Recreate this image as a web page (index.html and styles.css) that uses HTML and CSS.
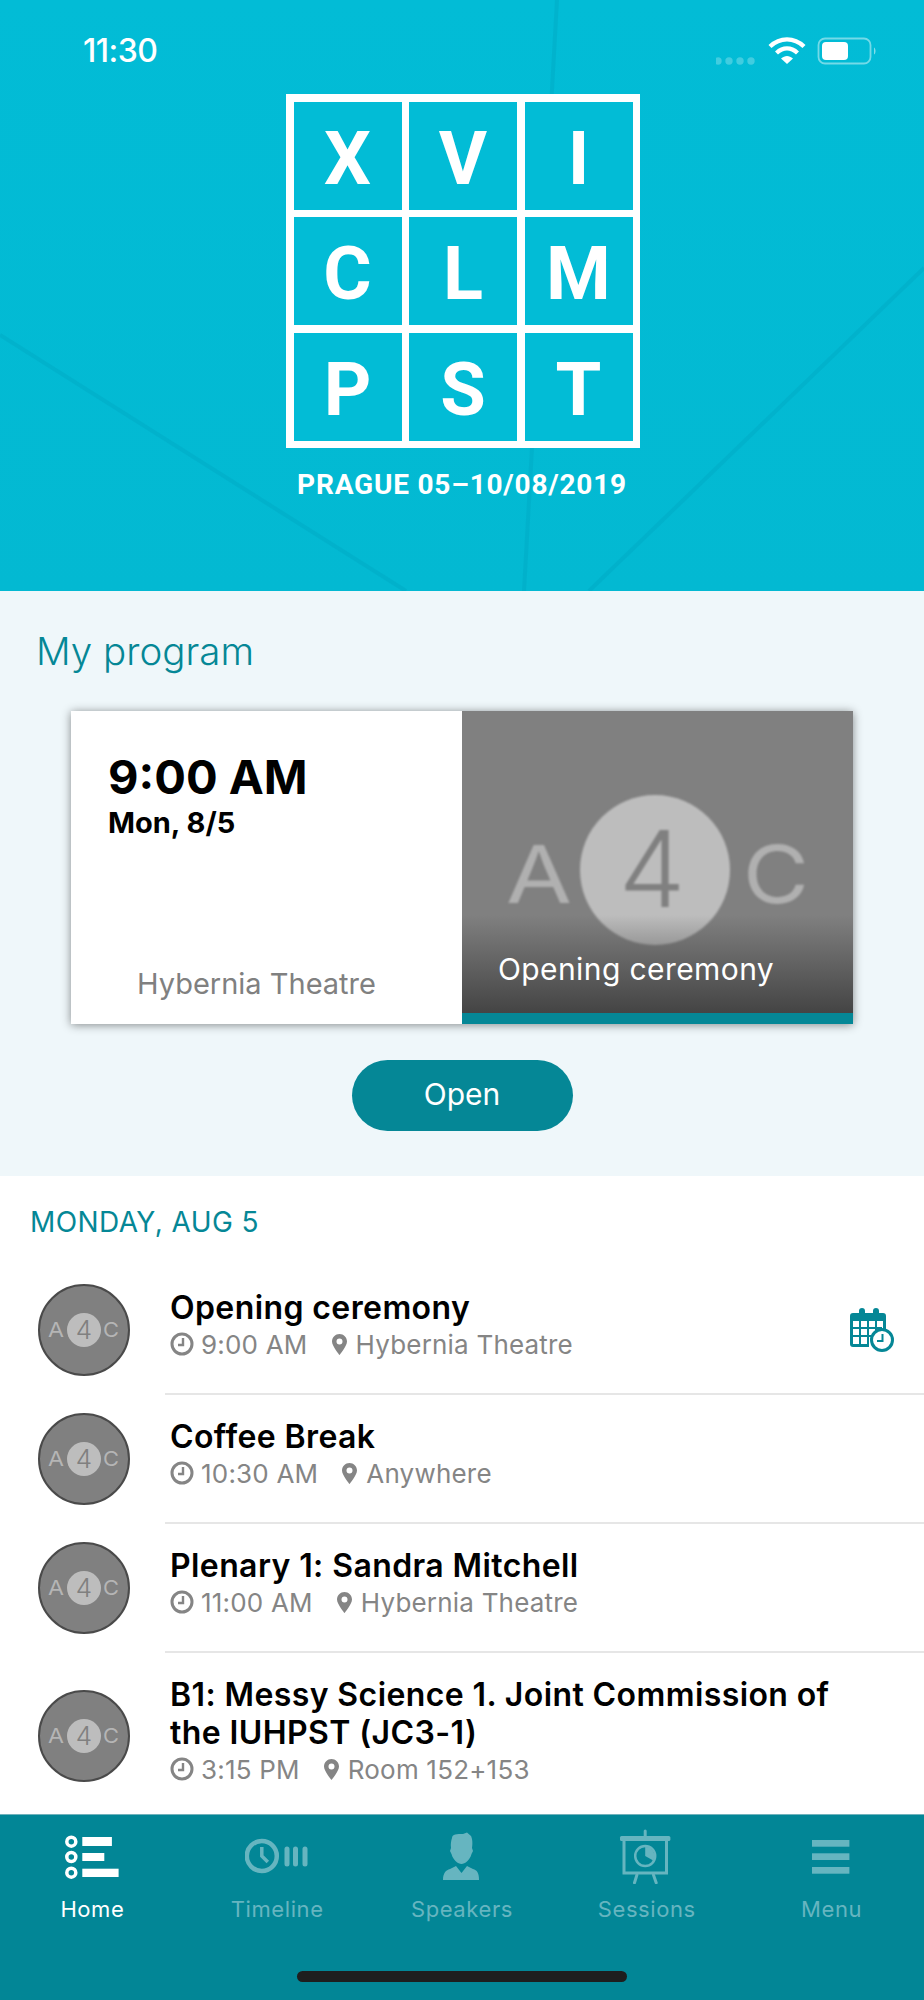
FILE: index.html
```html
<!DOCTYPE html>
<html lang="en">
<head>
    <meta charset="UTF-8">
    <title>XVI CLMPST</title>
    <link rel="stylesheet" href="styles.css">
</head>
<body>
    <svg class="defs" width="0" height="0">
        <symbol id="clock" viewBox="0 0 24 24">
            <circle cx="12" cy="12" r="10" fill="none" stroke="currentColor" stroke-width="3"/>
            <path d="M13 6v7H8" fill="none" stroke="currentColor" stroke-width="2.4"/>
        </symbol>
        <symbol id="pin" viewBox="0 0 15 21">
            <path fill="currentColor" fill-rule="evenodd" d="M7.5 0C3.4 0 0 3.3 0 7.4 0 12 7.5 21 7.5 21S15 12 15 7.4C15 3.3 11.6 0 7.5 0zM7.5 4.4a3 3 0 1 1 0 6 3 3 0 0 1 0-6z"/>
        </symbol>
    </svg>

    <div class="hero">
        <svg class="hero-lines" width="924" height="591" viewBox="0 0 924 591">
            <path d="M0 335L406 591M924 268L589 591M557 0L524 591" fill="none" stroke="#00a9c4" stroke-opacity="0.45" stroke-width="4"/>
        </svg>
        <div class="status">
            <span class="status-time">11:30</span>
            <svg width="160" height="34" viewBox="0 0 160 34">
                <g fill="#fff" fill-opacity="0.25">
                    <circle cx="2" cy="27" r="3.7"/><circle cx="13" cy="27" r="3.7"/>
                    <circle cx="24" cy="27" r="3.7"/><circle cx="35" cy="27" r="3.7"/>
                </g>
                <g fill="none" stroke="#fff" stroke-width="4.4">
                    <path d="M54 12.500C64 3 78 3 88 12.500"/>
                    <path d="M60.500 19C67 13 75 13 81.500 19"/>
                </g>
                <path d="M65 24.500C69 21 73 21 77 24.500L71 30z" fill="#fff"/>
                <rect x="102.500" y="4.500" width="52" height="25" rx="6.500" fill="none" stroke="#fff" stroke-opacity="0.45" stroke-width="1.800"/>
                <rect x="106" y="8" width="26" height="18" rx="4" fill="#fff"/>
                <path d="M158 13.500c2 1 2 6 0 7z" fill="#fff" fill-opacity="0.5"/>
            </svg>
        </div>
        <div class="logo">
            <div class="logo-cell">X</div><div class="logo-cell">V</div><div class="logo-cell">I</div>
            <div class="logo-cell">C</div><div class="logo-cell">L</div><div class="logo-cell">M</div>
            <div class="logo-cell">P</div><div class="logo-cell">S</div><div class="logo-cell">T</div>
        </div>
        <div class="tagline">PRAGUE 05–10/08/2019</div>
    </div>

    <div class="program">
        <h2 class="program-title">My program</h2>
        <div class="card">
            <div class="card-info">
                <div class="card-time">9:00 AM</div>
                <div class="card-date">Mon, 8/5</div>
                <div class="card-venue">Hybernia Theatre</div>
            </div>
            <div class="card-image">
                <svg class="card-logo" width="391" height="313" viewBox="0 0 391 313">
                    <circle cx="193" cy="159" r="75" fill="#bdbdbd"/>
                    <text x="44" y="192" font-size="80" fill="#b0b0b0" textLength="66" lengthAdjust="spacingAndGlyphs">A</text>
                    <text x="190" y="196" text-anchor="middle" font-size="106" font-weight="300" fill="#808080">4</text>
                    <text x="281" y="192" font-size="80" fill="#b0b0b0" textLength="66" lengthAdjust="spacingAndGlyphs">C</text>
                </svg>
                <div class="card-shade"></div>
                <div class="card-title">Opening ceremony</div>
            </div>
        </div>
        <a href="#" class="open-btn" onclick="return false">Open</a>
    </div>

    <div class="schedule">
        <div class="day">MONDAY, AUG 5</div>

        <div class="row">
            <svg class="avatar" viewBox="0 0 92 92">
                <circle cx="46" cy="46" r="45" fill="#808080" stroke="#4a4a4a" stroke-width="2"/>
                <circle cx="46" cy="46" r="17" fill="#bdbdbd"/>
                <text x="10" y="53" class="a4c-side" textLength="16" lengthAdjust="spacingAndGlyphs">A</text>
                <text x="46" y="55" class="a4c-four">4</text>
                <text x="65" y="53" class="a4c-side" textLength="16" lengthAdjust="spacingAndGlyphs">C</text>
            </svg>
            <div class="row-main">
                <div class="row-text">
                    <div class="row-title">Opening ceremony</div>
                    <div class="row-sub">
                        <svg class="ico-clock"><use href="#clock"/></svg><span class="sub-time">9:00 AM</span>
                        <svg class="ico-pin"><use href="#pin"/></svg><span>Hybernia Theatre</span>
                    </div>
                </div>
                <svg class="row-cal" width="44" height="44" viewBox="0 0 44 44">
                    <path fill="#058796" d="M3 5h6V3a3 3 0 0 1 6 0v2h8V3a3 3 0 0 1 6 0v2h4a3 3 0 0 1 3 3v17h-3V13H3v23h16v3H3a3 3 0 0 1-3-3V8a3 3 0 0 1 3-3z"/>
                    <path fill="none" stroke="#058796" stroke-width="2" d="M2 20h30M2 28h20M10 13v24M18 13v24M26 13v10"/>
                    <circle cx="32" cy="32" r="10.500" fill="#fff" stroke="#058796" stroke-width="3"/>
                    <path d="M32.500 26v7H27" fill="none" stroke="#058796" stroke-width="2"/>
                </svg>
            </div>
        </div>

        <div class="row">
            <svg class="avatar" viewBox="0 0 92 92">
                <circle cx="46" cy="46" r="45" fill="#808080" stroke="#4a4a4a" stroke-width="2"/>
                <circle cx="46" cy="46" r="17" fill="#bdbdbd"/>
                <text x="10" y="53" class="a4c-side" textLength="16" lengthAdjust="spacingAndGlyphs">A</text>
                <text x="46" y="55" class="a4c-four">4</text>
                <text x="65" y="53" class="a4c-side" textLength="16" lengthAdjust="spacingAndGlyphs">C</text>
            </svg>
            <div class="row-main">
                <div class="row-text">
                    <div class="row-title">Coffee Break</div>
                    <div class="row-sub">
                        <svg class="ico-clock"><use href="#clock"/></svg><span class="sub-time">10:30 AM</span>
                        <svg class="ico-pin"><use href="#pin"/></svg><span>Anywhere</span>
                    </div>
                </div>
            </div>
        </div>

        <div class="row">
            <svg class="avatar" viewBox="0 0 92 92">
                <circle cx="46" cy="46" r="45" fill="#808080" stroke="#4a4a4a" stroke-width="2"/>
                <circle cx="46" cy="46" r="17" fill="#bdbdbd"/>
                <text x="10" y="53" class="a4c-side" textLength="16" lengthAdjust="spacingAndGlyphs">A</text>
                <text x="46" y="55" class="a4c-four">4</text>
                <text x="65" y="53" class="a4c-side" textLength="16" lengthAdjust="spacingAndGlyphs">C</text>
            </svg>
            <div class="row-main">
                <div class="row-text">
                    <div class="row-title">Plenary 1: Sandra Mitchell</div>
                    <div class="row-sub">
                        <svg class="ico-clock"><use href="#clock"/></svg><span class="sub-time">11:00 AM</span>
                        <svg class="ico-pin"><use href="#pin"/></svg><span>Hybernia Theatre</span>
                    </div>
                </div>
            </div>
        </div>

        <div class="row">
            <svg class="avatar" viewBox="0 0 92 92">
                <circle cx="46" cy="46" r="45" fill="#808080" stroke="#4a4a4a" stroke-width="2"/>
                <circle cx="46" cy="46" r="17" fill="#bdbdbd"/>
                <text x="10" y="53" class="a4c-side" textLength="16" lengthAdjust="spacingAndGlyphs">A</text>
                <text x="46" y="55" class="a4c-four">4</text>
                <text x="65" y="53" class="a4c-side" textLength="16" lengthAdjust="spacingAndGlyphs">C</text>
            </svg>
            <div class="row-main">
                <div class="row-text">
                    <div class="row-title">B1: Messy Science 1. Joint Commission of the IUHPST (JC3-1)</div>
                    <div class="row-sub">
                        <svg class="ico-clock"><use href="#clock"/></svg><span class="sub-time">3:15 PM</span>
                        <svg class="ico-pin"><use href="#pin"/></svg><span>Room 152+153</span>
                    </div>
                </div>
            </div>
        </div>
    </div>

    <div class="tabbar">
        <div class="tab active">
            <svg width="64" height="56" viewBox="0 0 64 56">
                <g fill="none" stroke="currentColor" stroke-width="3.500">
                    <circle cx="11.300" cy="13.700" r="4.500"/><circle cx="11.300" cy="29" r="4.500"/><circle cx="11.300" cy="44.700" r="4.500"/>
                </g>
                <rect x="22.300" y="9" width="29.600" height="9" fill="currentColor"/>
                <rect x="22.300" y="25" width="22" height="8" fill="currentColor"/>
                <rect x="22.300" y="40.700" width="36.300" height="8.300" fill="currentColor"/>
            </svg>
            <span>Home</span>
        </div>
        <div class="tab">
            <svg width="64" height="56" viewBox="0 0 64 56">
                <circle cx="16.800" cy="28" r="15" fill="none" stroke="currentColor" stroke-width="4.500"/>
                <path d="M16.800 19v9l6 6" fill="none" stroke="currentColor" stroke-width="3.500"/>
                <path d="M42 21v15M50.500 21v15M60 21v15" fill="none" stroke="currentColor" stroke-width="5" stroke-linecap="round"/>
            </svg>
            <span>Timeline</span>
        </div>
        <div class="tab">
            <svg width="64" height="56" viewBox="0 0 64 56">
                <path fill="currentColor" d="M22 10C22 6 27 6 33 6L37 4.500 41 8C42 10 43 14 42 20L43 23 41.500 26C40 32 35 36 31.500 36 28 36 23 32 21.500 26L20 23 21 20C20.500 16 21 13 22 10Z"/>
                <path fill="currentColor" d="M13 52C13 45 16 42 20 41L26 38 31.500 45 37 38 43 41C47 42 49 45 49 52Z"/>
            </svg>
            <span>Speakers</span>
        </div>
        <div class="tab">
            <svg width="64" height="56" viewBox="0 0 64 56">
                <path d="M30.200 3v6" fill="none" stroke="currentColor" stroke-width="3" stroke-linecap="round"/>
                <rect x="5" y="8" width="50.400" height="5" rx="1.500" fill="currentColor"/>
                <path d="M9 13v32h42.500V13" fill="none" stroke="currentColor" stroke-width="3"/>
                <circle cx="30.200" cy="28" r="10" fill="none" stroke="currentColor" stroke-width="2.500"/>
                <path d="M30.200 28v-9a9 9 0 0 1 8 13.500z" fill="currentColor"/>
                <path d="M21.900 47l-2.400 7.700M38.500 47l2.700 7.700" fill="none" stroke="currentColor" stroke-width="3" stroke-linecap="round"/>
            </svg>
            <span>Sessions</span>
        </div>
        <div class="tab">
            <svg width="64" height="56" viewBox="0 0 64 56">
                <rect x="12" y="12" width="37.400" height="6.700" fill="currentColor"/>
                <rect x="12" y="25.300" width="37.400" height="6.700" fill="currentColor"/>
                <rect x="12" y="39" width="37.400" height="6.700" fill="currentColor"/>
            </svg>
            <span>Menu</span>
        </div>
        <div class="home-bar"></div>
    </div>
</body>
</html>
```

FILE: styles.css
```css
* {
    padding: 0;
    margin: 0;
    box-sizing: border-box;
}
html, body {
    height: 2000px;
    overflow: hidden;
}
body {
    display: flex;
    flex-direction: column;
    font-family: Inter, "Liberation Sans", sans-serif;
    background-color: #fff;
}
.defs {
    position: absolute;
}

/* header */
.hero {
    position: relative;
    isolation: isolate;
    height: 591px;
    flex-shrink: 0;
    display: flex;
    flex-direction: column;
    align-items: center;
    color: #fff;
    background: linear-gradient(to bottom, #02bcd6, #03b9d2);
}
.hero-lines {
    position: absolute;
    top: 0;
    left: 0;
    z-index: -1;
}
.status {
    width: 100%;
    height: 94px;
    padding: 7px 48px 0 83px;
    display: flex;
    justify-content: space-between;
    align-items: center;
}
.status-time {
    font-size: 32px;
    font-weight: 500;
    letter-spacing: -0.5px;
}
.logo {
    width: 354px;
    height: 354px;
    margin-left: 2px;
    padding: 7.5px;
    display: grid;
    grid-template-columns: repeat(3, 1fr);
    grid-template-rows: repeat(3, 1fr);
    gap: 7.5px;
    background-color: #fff;
}
.logo-cell {
    display: flex;
    align-items: center;
    justify-content: center;
    padding-top: 5px;
    background-color: #02bcd6;
    font: bold 74px Roboto, sans-serif;
}
.tagline {
    margin-top: 20.5px;
    font: bold 28px/32px Roboto, sans-serif;
    letter-spacing: 0.8px;
}

/* my program */
.program {
    flex-shrink: 0;
    height: 585px;
    padding-top: 36px;
    background-color: #eff7fa;
    display: flex;
    flex-direction: column;
}
.program-title {
    margin-left: 36px;
    font-size: 38.5px;
    line-height: 48px;
    font-weight: 300;
    color: #058796;
}
.card {
    margin: 36px 71px 0;
    height: 313px;
    display: flex;
    box-shadow: 0 1px 9px rgba(0, 0, 0, 0.45);
}
.card-info {
    width: 391px;
    padding: 38px 0 22px 37px;
    display: flex;
    flex-direction: column;
    background-color: #fff;
}
.card-time {
    font-size: 47px;
    line-height: 56px;
    font-weight: 700;
    color: #000;
}
.card-date {
    font-size: 29px;
    line-height: 36px;
    font-weight: 700;
    color: #000;
}
.card-venue {
    margin-top: auto;
    margin-left: 29px;
    font-size: 29px;
    line-height: 36px;
    color: #808080;
}
.card-image {
    position: relative;
    width: 391px;
    background-color: #808080;
    border-bottom: 11.5px solid #058796;
    overflow: hidden;
}
.card-logo {
    display: block;
    filter: blur(1px);
    font-family: Inter, sans-serif;
    font-weight: 400;
}
.card-shade {
    position: absolute;
    left: 0;
    right: 0;
    bottom: 0;
    height: 98px;
    background: linear-gradient(to bottom, rgba(68, 68, 68, 0), #444);
}
.card-title {
    position: absolute;
    left: 36px;
    bottom: 26px;
    font-size: 30px;
    line-height: 36px;
    letter-spacing: 0.4px;
    color: #fff;
}
.open-btn {
    align-self: center;
    margin-top: 36px;
    width: 221px;
    height: 71px;
    border-radius: 36px;
    background-color: #058796;
    color: #fff;
    font-size: 30px;
    line-height: 69px;
    text-align: center;
    text-decoration: none;
}

/* schedule */
.schedule {
    flex: 1;
    min-height: 0;
    overflow: hidden;
    background-color: #fff;
}
.day {
    margin: 29px 0 0 30px;
    height: 61px;
    font-size: 28px;
    line-height: 34px;
    letter-spacing: 0.4px;
    color: #058796;
}
.row {
    display: flex;
    padding-left: 38px;
}
.avatar {
    width: 92px;
    height: 92px;
    flex-shrink: 0;
    align-self: center;
    margin: 0 35px 2px 0;
}
.a4c-side {
    font-size: 20px;
    fill: #b5b5b5;
}
.a4c-four {
    font-size: 26px;
    font-weight: 300;
    fill: #808080;
    text-anchor: middle;
}
.row-main {
    flex: 1;
    min-width: 0;
    display: flex;
    align-items: center;
    border-bottom: 2px solid #e6e6e6;
}
.row:last-child .row-main {
    border-bottom: 0;
}
.row-text {
    flex: 1;
    min-width: 0;
    padding: 23px 50px 32px 5px;
}
.row:last-child .row-text {
    padding-bottom: 35px;
}
.row-title {
    font-size: 32px;
    line-height: 38px;
    font-weight: 600;
    letter-spacing: 0.4px;
    color: #000;
}
.row-sub {
    display: flex;
    align-items: center;
    height: 34px;
    font-size: 26px;
    letter-spacing: 0.2px;
    color: #858585;
}
.ico-clock {
    width: 24px;
    height: 24px;
    margin-right: 7px;
}
.ico-pin {
    width: 15px;
    height: 21px;
    margin: 0 9px 0 24px;
}
.row-cal {
    flex-shrink: 0;
    margin-right: 30px;
}

/* tab bar */
.tabbar {
    position: relative;
    flex-shrink: 0;
    height: 186px;
    padding-top: 13px;
    display: flex;
    background-color: #028696;
    border-top: 1px solid #6fb2bc;
}
.tab {
    flex: 1;
    display: flex;
    flex-direction: column;
    align-items: center;
    color: #66b5c0;
    font-size: 22px;
    line-height: 28px;
    letter-spacing: 0.6px;
}
.tab span {
    margin-top: 11px;
}
.tab.active {
    color: #fff;
}
.home-bar {
    position: absolute;
    left: 297px;
    top: 156px;
    width: 330px;
    height: 11px;
    border-radius: 6px;
    background-color: #1e1e1e;
}
```
